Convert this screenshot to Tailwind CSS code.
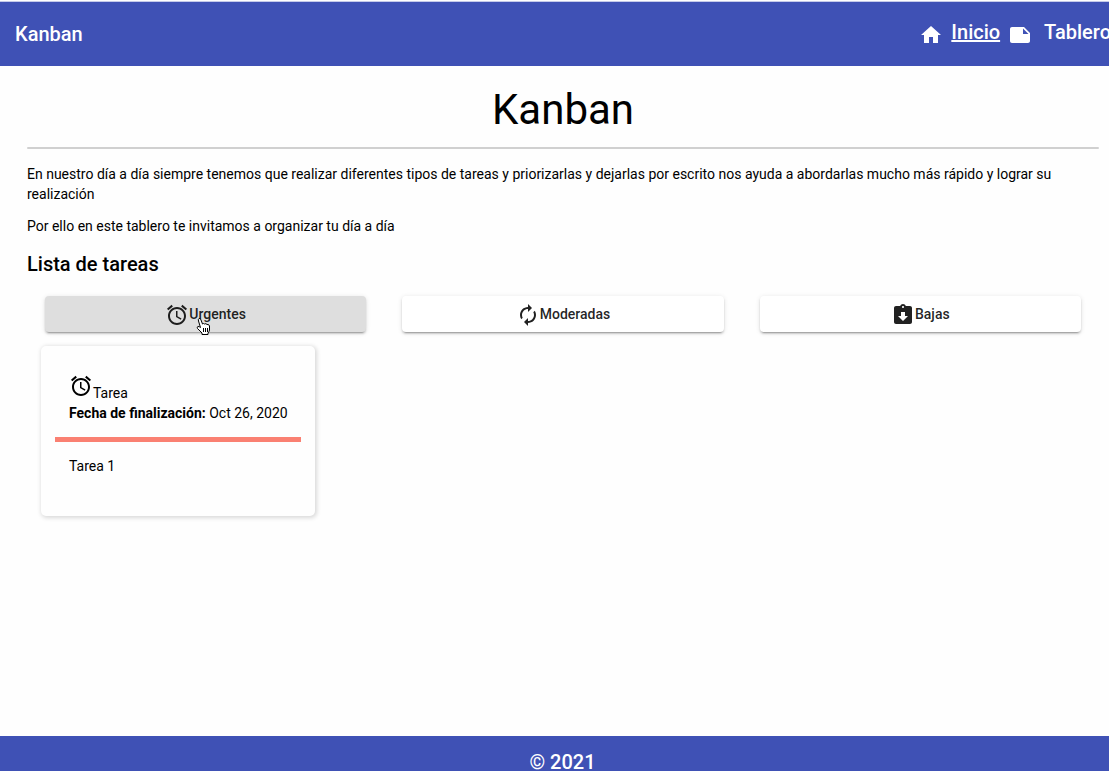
<!DOCTYPE html>
<html lang="es">
<head>
<meta charset="utf-8">
<meta name="viewport" content="width=device-width, initial-scale=1">
<title>Kanban</title>
<script src="https://cdn.jsdelivr.net/npm/@tailwindcss/browser@4"></script>
</head>
<body class="flex h-screen flex-col overflow-hidden bg-[#fefefe] font-[Roboto,sans-serif] text-sm leading-5 text-black">
<header class="mt-px flex h-[65px] shrink-0 items-center justify-between overflow-hidden border-t border-[#c5cae9] bg-[#3f51b5] pl-[15px] text-xl font-medium text-white">
  <span>Kanban</span>
  <nav class="-mr-0.5 flex shrink-0 items-center">
    <svg class="mt-0.5 mr-2 size-6" viewBox="0 0 24 24" fill="currentColor" aria-hidden="true"><path d="M10 20v-6h4v6h5v-8h3L12 3 2 12h3v8z"/></svg>
    <a href="#" class="mr-2 pb-1 underline">Inicio</a>
    <svg class="mt-0.5 mr-3 size-6" viewBox="0 0 24 24" fill="currentColor" aria-hidden="true"><path d="M22 10l-6-6H4c-1.100 0-2 .9-2 2v12.010c0 1.100.9 1.990 2 1.990l16-.01c1.100 0 2-.89 2-1.990v-8zm-7-4.500l5.500 5.500H15V5.500z"/></svg>
    <a href="#" class="pb-1">Tablero</a>
  </nav>
</header>
<main class="flex-1 pr-2.5 pl-[27px]">
  <h1 class="pt-5 text-center text-[42px] leading-[48px]">Kanban</h1>
  <hr class="mt-[13px] rounded-sm border-0 border-t-2 border-[#d0d0d0]">
  <p class="mt-[15px]">En nuestro día a día siempre tenemos que realizar diferentes tipos de tareas y priorizarlas y dejarlas por escrito nos ayuda a abordarlas mucho más rápido y lograr su realización</p>
  <p class="mt-3">Por ello en este tablero te invitamos a organizar tu día a día</p>
  <h2 class="mt-3 text-xl leading-8 font-medium">Lista de tareas</h2>
  <div class="mt-4 grid grid-cols-3">
    <section>
      <button type="button" class="relative mx-auto flex h-9 w-[90%] cursor-pointer items-center justify-center rounded bg-[#dedede] font-medium text-black/87 shadow-[0_3px_1px_-2px_rgba(0,0,0,0.2),0_2px_2px_0_rgba(0,0,0,0.14),0_1px_5px_0_rgba(0,0,0,0.12)]">
        <svg class="mt-0.5 size-6" viewBox="0 0 24 24" fill="currentColor" aria-hidden="true"><path d="M22 5.720l-4.600-3.860-1.290 1.530 4.600 3.860L22 5.720zM7.880 3.390L6.600 1.860 2 5.710l1.290 1.530 4.590-3.850zM12.500 8H11v6l4.750 2.850.75-1.230-4-2.370V8zM12 4c-4.970 0-9 4.030-9 9s4.020 9 9 9c4.970 0 9-4.030 9-9s-4.030-9-9-9zm0 16c-3.870 0-7-3.130-7-7s3.130-7 7-7 7 3.130 7 7-3.130 7-7 7z"/></svg>
        <span>Urgentes</span>
        <svg class="absolute top-[21px] left-[151px] h-[19px] w-4" viewBox="0 0 16 19" fill="white" stroke="black" stroke-width="1" stroke-linejoin="round" aria-hidden="true"><path d="M4.500 10.500 2.500 4Q2 2 3 1.500 4.500 1 5 3L6.500 7Q7.500 6 8.500 7 10 6 11 7.500 13 7 13.500 9V13Q13 15 12 16V17.500H6V16L1.500 11.500Q.5 10 2 9.500 3 9.300 4.500 10.500Z"/><path d="M7.500 11v4M9.500 11v4M11.500 11v4"/></svg>
      </button>
      <article class="mt-3.5 ml-3.5 h-[170px] w-[274px] rounded-[5px] bg-[#fefefe] px-3.5 pt-7 shadow-[1px_1px_4px_1px_rgba(0,0,0,0.15)]">
        <div class="px-3.5">
          <div class="flex h-[29px] items-start">
            <svg class="size-6" viewBox="0 0 24 24" fill="currentColor" aria-hidden="true"><path d="M22 5.720l-4.600-3.860-1.290 1.530 4.600 3.860L22 5.720zM7.880 3.390L6.600 1.860 2 5.710l1.290 1.530 4.590-3.850zM12.500 8H11v6l4.750 2.850.75-1.230-4-2.370V8zM12 4c-4.970 0-9 4.030-9 9s4.020 9 9 9c4.970 0 9-4.030 9-9s-4.030-9-9-9zm0 16c-3.870 0-7-3.130-7-7s3.130-7 7-7 7 3.130 7 7-3.130 7-7 7z"/></svg>
            <h3 class="self-end">Tarea</h3>
          </div>
          <p class="whitespace-nowrap"><strong class="font-bold">Fecha de finalización:</strong> Oct 26, 2020</p>
        </div>
        <hr class="mt-3.5 border-0 border-t-5 border-[#fa8072]">
        <p class="mt-3.5 px-3.5">Tarea 1</p>
      </article>
    </section>
    <section>
      <button type="button" class="mx-auto flex h-9 w-[90%] cursor-pointer items-center justify-center rounded bg-white font-medium text-black/87 shadow-[0_3px_1px_-2px_rgba(0,0,0,0.2),0_2px_2px_0_rgba(0,0,0,0.14),0_1px_5px_0_rgba(0,0,0,0.12)]">
        <svg class="mt-0.5 size-6" viewBox="0 0 24 24" fill="currentColor" aria-hidden="true"><path d="M12 6v3l4-4-4-4v3c-4.420 0-8 3.580-8 8 0 1.570.46 3.030 1.240 4.260L6.700 14.800c-.45-.83-.7-1.790-.7-2.800 0-3.310 2.690-6 6-6zm6.760 1.740L17.300 9.200c.44.840.7 1.790.7 2.800 0 3.310-2.690 6-6 6v-3l-4 4 4 4v-3c4.420 0 8-3.580 8-8 0-1.570-.46-3.030-1.240-4.260z"/></svg>
        <span>Moderadas</span>
      </button>
    </section>
    <section>
      <button type="button" class="mx-auto flex h-9 w-[90%] cursor-pointer items-center justify-center rounded bg-white font-medium text-black/87 shadow-[0_3px_1px_-2px_rgba(0,0,0,0.2),0_2px_2px_0_rgba(0,0,0,0.14),0_1px_5px_0_rgba(0,0,0,0.12)]">
        <svg class="mt-0.5 size-6" viewBox="0 0 24 24" fill="currentColor" aria-hidden="true"><path d="M19 3h-4.180C14.400 1.840 13.300 1 12 1c-1.300 0-2.400.84-2.820 2H5c-1.100 0-2 .9-2 2v14c0 1.100.9 2 2 2h14c1.100 0 2-.9 2-2V5c0-1.100-.9-2-2-2zm-7 0c.55 0 1 .45 1 1s-.45 1-1 1-1-.45-1-1 .45-1 1-1zm0 15l-5-5h3V9h4v4h3l-5 5z"/></svg>
        <span>Bajas</span>
      </button>
    </section>
  </div>
</main>
<footer class="h-[35px] shrink-0 bg-[#3f51b5] pt-4 pl-4 text-center text-xl leading-5 font-medium text-white">© 2021</footer>
</body>
</html>
